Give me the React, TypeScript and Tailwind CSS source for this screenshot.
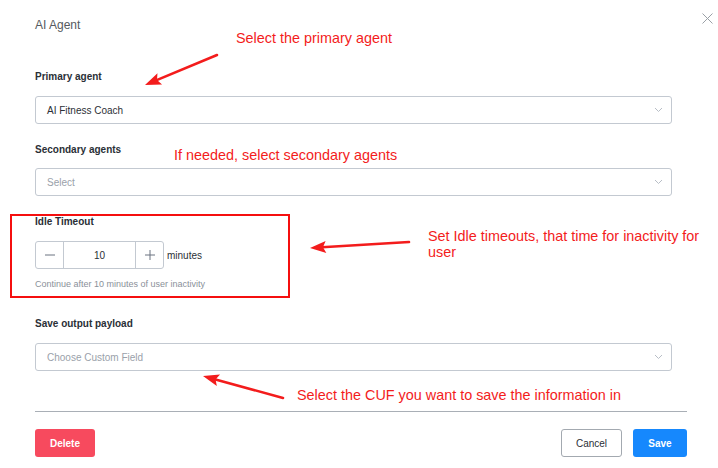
import React from "react";

function Arrow({ x1, y1, x2, y2 }: { x1: number; y1: number; x2: number; y2: number }) {
  const dx = x2 - x1;
  const dy = y2 - y1;
  const len = Math.sqrt(dx * dx + dy * dy);
  const ux = dx / len;
  const uy = dy / len;
  const hl = 16;
  const hw = 6;
  const bx = x2 - ux * hl;
  const by = y2 - uy * hl;
  const px = -uy;
  const py = ux;
  const pts = `${x2},${y2} ${bx + px * hw},${by + py * hw} ${bx + ux * 3},${by + uy * 3} ${bx - px * hw},${by - py * hw}`;
  return (
    <g>
      <line x1={x1} y1={y1} x2={bx + ux * 4} y2={by + uy * 4} stroke="#f31c1c" strokeWidth={2.6} strokeLinecap="round" />
      <polygon points={pts} fill="#f31c1c" />
    </g>
  );
}

function Chevron() {
  return (
    <svg width="9" height="6" viewBox="0 0 9 6" className="shrink-0">
      <path d="M1 1 L4.5 4.5 L8 1" fill="none" stroke="#b8bec6" strokeWidth="1" />
    </svg>
  );
}

function SelectBox({ value, placeholder }: { value?: string; placeholder?: string }) {
  return (
    <div className="w-[637px] h-[28px] border border-[#c3c9d1] rounded-[3px] flex items-center justify-between pl-[11px] pr-[8px] bg-white">
      {value ? (
        <span className="text-[10px] text-[#2b2f36]">{value}</span>
      ) : (
        <span className="text-[10px] text-[#9aa1aa]">{placeholder}</span>
      )}
      <Chevron />
    </div>
  );
}

export default function App() {
  return (
    <div className="relative w-[718px] h-[468px] bg-white overflow-hidden font-['Liberation_Sans',Arial,sans-serif]">
      <div className="ml-[35px] w-[652px] pt-[17px] flex flex-col">
        <div className="text-[12px] leading-[16px] text-[#555a60]">AI Agent</div>

        <div className="mt-[38px] text-[10px] leading-[12px] font-bold text-[#2a2f36]">Primary agent</div>
        <div className="mt-[13px]">
          <SelectBox value="AI Fitness Coach" />
        </div>

        <div className="mt-[20px] text-[10px] leading-[12px] font-bold text-[#2a2f36]">Secondary agents</div>
        <div className="mt-[12px]">
          <SelectBox placeholder="Select" />
        </div>

        <div className="mt-[20px] text-[10px] leading-[12px] font-bold text-[#2a2f36]">Idle Timeout</div>
        <div className="mt-[13px] flex items-center">
          <div className="flex h-[28px] w-[129px] border border-[#c3c9d1] rounded-[3px]">
            <div className="w-[28px] flex items-center justify-center border-r border-[#c3c9d1]">
              <svg width="10" height="2" viewBox="0 0 10 2"><path d="M0 1 H10" stroke="#6b7280" strokeWidth="1" /></svg>
            </div>
            <div className="flex-1 flex items-center justify-center text-[10px] text-[#2b2f36]">10</div>
            <div className="w-[28px] flex items-center justify-center border-l border-[#c3c9d1]">
              <svg width="10" height="10" viewBox="0 0 10 10"><path d="M0 5 H10 M5 0 V10" stroke="#6b7280" strokeWidth="1" /></svg>
            </div>
          </div>
          <span className="ml-[3px] text-[10px] text-[#2b2f36]">minutes</span>
        </div>
        <div className="mt-[9px] text-[9px] leading-[12px] text-[#8a9099]">Continue after 10 minutes of user inactivity</div>

        <div className="mt-[28px] text-[10px] leading-[12px] font-bold text-[#2a2f36]">Save output payload</div>
        <div className="mt-[13px]">
          <SelectBox placeholder="Choose Custom Field" />
        </div>

        <div className="mt-[40px] h-px bg-[#a9afb6]" />

        <div className="mt-[17px] flex items-center justify-between">
          <button className="w-[60px] h-[28px] rounded-[3px] bg-[#f74a5e] text-white text-[10px] font-bold">Delete</button>
          <div className="flex gap-[11px]">
            <button className="w-[61px] h-[28px] rounded-[3px] border border-[#a3a9b0] bg-white text-[#2b2f36] text-[10px]">Cancel</button>
            <button className="w-[54px] h-[28px] rounded-[3px] bg-[#1688fd] text-white text-[10px] font-bold">Save</button>
          </div>
        </div>
      </div>

      {/* close button */}
      <button className="absolute left-[701px] top-[12px] w-[12px] h-[12px] flex items-center justify-center">
        <svg width="11" height="11" viewBox="0 0 11 11">
          <path d="M0.5 0.5 L10.5 10.5 M10.5 0.5 L0.5 10.5" stroke="#9aa0a6" strokeWidth="1" />
        </svg>
      </button>

      {/* annotation overlay */}
      <div className="absolute left-[10px] top-[214px] w-[280px] h-[84px] border-2 border-[#f50f0f]" />
      <svg className="absolute left-0 top-0 pointer-events-none" width="718" height="468">
        <Arrow x1={217} y1={55} x2={145} y2={85} />
        <Arrow x1={409} y1={242} x2={310} y2={248} />
        <Arrow x1={283} y1={398} x2={203} y2={376} />
      </svg>
      <div className="absolute left-[236px] top-[30px] text-[14.4px] leading-[16px] text-[#f31c1c]">Select the primary agent</div>
      <div className="absolute left-[174px] top-[147px] text-[14.4px] leading-[16px] text-[#f31c1c]">If needed, select secondary agents</div>
      <div className="absolute left-[428px] top-[228px] text-[14.4px] leading-[16px] text-[#f31c1c]">
        Set Idle timeouts, that time for inactivity for
        <br />
        user
      </div>
      <div className="absolute left-[297px] top-[387px] text-[14.4px] leading-[16px] text-[#f31c1c]">Select the CUF you want to save the information in</div>
    </div>
  );
}
